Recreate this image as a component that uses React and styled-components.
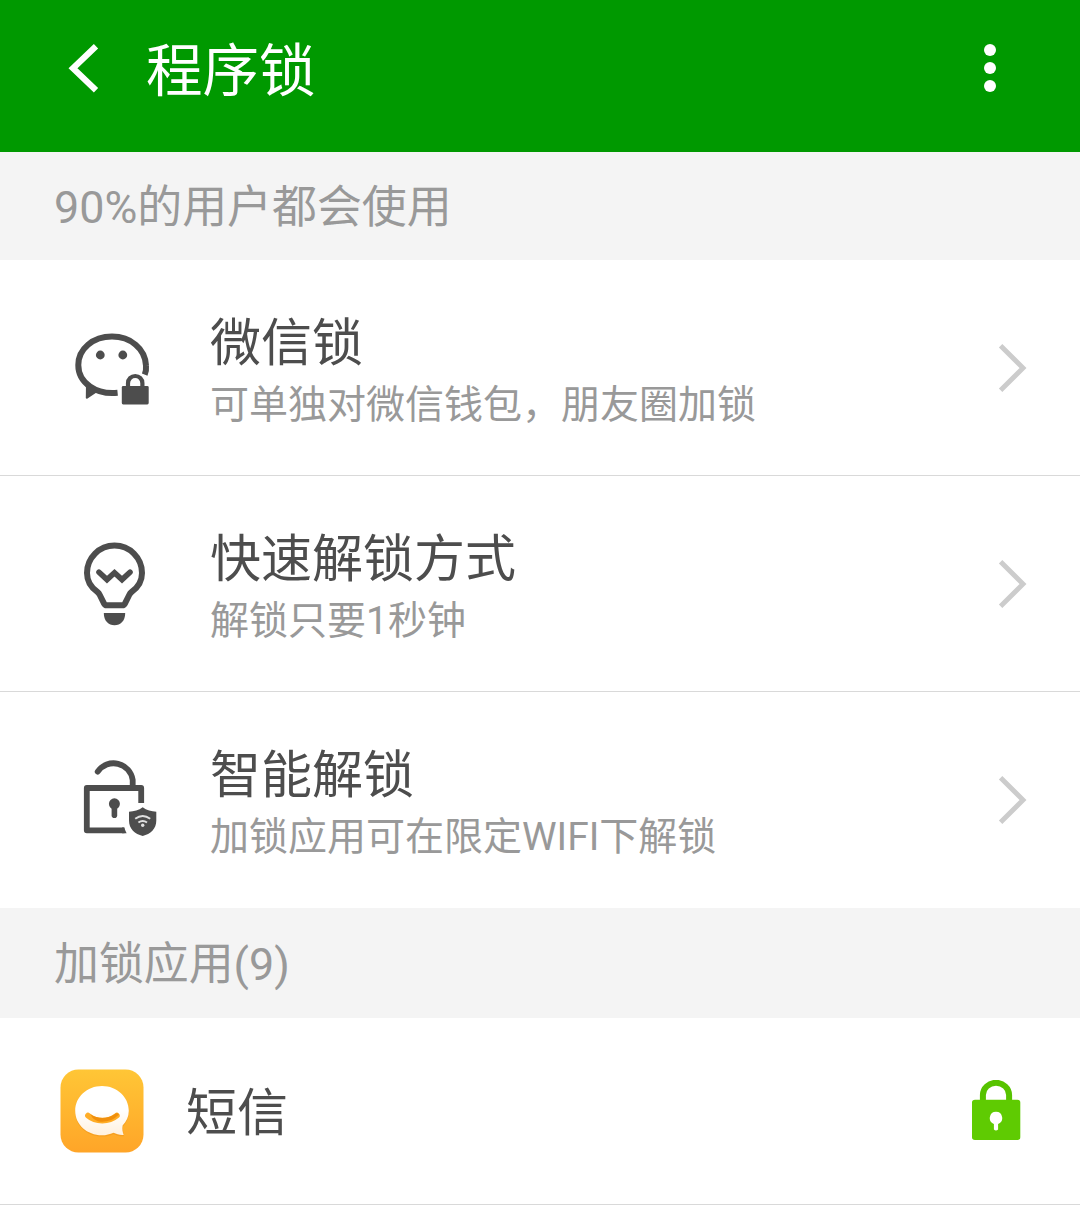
import React from 'react';
import styled, { createGlobalStyle } from 'styled-components';

const lockOptions = [
  { id: 'wechat', title: '微信锁', text: '可单独对微信钱包，朋友圈加锁' },
  { id: 'quick', title: '快速解锁方式', text: '解锁只要1秒钟' },
  { id: 'smart', title: '智能解锁', text: '加锁应用可在限定WIFI下解锁' },
];

const WechatIcon = () => (
  <OptionSvg viewBox="60 318 110 99">
    <path
      d="M144.7 374.6 C145.9 371.8 146.3 368.5 146 365.5 C145.2 348.5 130.5 336.6 112 336.6 C93 336.6 78.3 349 78.3 365 C78.3 374 82.5 381.3 90 386.5 C97.5 391.8 107 393.8 117.6 392.8"
      fill="none"
      stroke="#4d4d4d"
      strokeWidth="6"
    />
    <path d="M86 383 L85.8 398 Q86.4 399.2 87.5 398.4 L98 391.5 Z" fill="#4d4d4d" />
    <circle cx="100.3" cy="355" r="4.4" fill="#4d4d4d" />
    <circle cx="122.8" cy="355" r="4.4" fill="#4d4d4d" />
    <path
      d="M128 388 V383.2 A7.2 7.2 0 0 1 142.4 383.2 V388"
      fill="none"
      stroke="#4d4d4d"
      strokeWidth="4.2"
    />
    <rect x="121.8" y="386" width="26.9" height="18.4" rx="1.4" fill="#4d4d4d" />
  </OptionSvg>
);

const BulbIcon = () => (
  <OptionSvg viewBox="60 534 110 99">
    <path
      d="M106.5 605.3 H122.5 Q124 605.3 124.8 603.8 L129.2 595 Q130 593.4 131.5 592 C138 587.5 142 581 142 573 A27.5 27.5 0 0 0 87 573 C87 581 91 587.5 97.5 592 Q99 593.4 99.8 595 L104.2 603.8 Q105 605.3 106.5 605.3 Z"
      fill="none"
      stroke="#4d4d4d"
      strokeWidth="6"
    />
    <path
      d="M99 572.2 L107 579.6 L114.5 572.8 L122 579.6 L130 572.2"
      fill="none"
      stroke="#4d4d4d"
      strokeWidth="5.6"
      strokeLinecap="round"
    />
    <path d="M103.8 613 H125.2 C125.2 621 120.5 625.2 114.5 625.2 C108.5 625.2 103.8 621 103.8 613 Z" fill="#4d4d4d" />
  </OptionSvg>
);

const SmartLockIcon = () => (
  <OptionSvg viewBox="60 750 110 99">
    <path
      d="M97.7 771.6 A19.3 19.3 0 0 1 132.7 780 V787"
      fill="none"
      stroke="#4d4d4d"
      strokeWidth="5.8"
      strokeLinecap="round"
    />
    <path
      d="M141.2 803 V788 H86.8 V830.3 H124.5"
      fill="none"
      stroke="#4d4d4d"
      strokeWidth="5.8"
      strokeLinejoin="round"
    />
    <path d="M122 827.4 H124 L126.6 833.2 H122 Z" fill="#4d4d4d" />
    <circle cx="114.4" cy="803.8" r="5.5" fill="#4d4d4d" />
    <path d="M114.4 804 V815.3" fill="none" stroke="#4d4d4d" strokeWidth="5.6" strokeLinecap="round" />
    <path
      d="M142.7 807.3 C146.5 810.3 151.5 811.5 156.3 811.8 V820.5 C156.3 829 150.5 834 142.7 836 C134.9 834 129 829 129 820.5 V811.8 C133.9 811.5 138.9 810.3 142.7 807.3 Z"
      fill="#4d4d4d"
    />
    <path d="M135.2 818.8 Q142.7 813.2 150.2 818.8" fill="none" stroke="#e0e0e0" strokeWidth="1.9" />
    <path d="M138.4 822.6 Q142.7 819.2 147 822.6" fill="none" stroke="#e0e0e0" strokeWidth="1.9" />
    <circle cx="142.7" cy="825.3" r="1.7" fill="#e0e0e0" />
  </OptionSvg>
);

const icons = {
  wechat: WechatIcon,
  quick: BulbIcon,
  smart: SmartLockIcon,
};

const MessageIcon = () => (
  <AppSvg viewBox="60 1069 84 84">
    <defs>
      <linearGradient id="appBg" x1="0" y1="0" x2="0" y2="1">
        <stop offset="0" stopColor="#ffc636" />
        <stop offset="1" stopColor="#ffa528" />
      </linearGradient>
      <linearGradient id="bubble" x1="0" y1="0" x2="0" y2="1">
        <stop offset="0" stopColor="#ffffff" />
        <stop offset="0.5" stopColor="#ffffff" />
        <stop offset="1" stopColor="#fff1de" />
      </linearGradient>
    </defs>
    <rect x="60.5" y="1069.5" width="83" height="83" rx="18" fill="url(#appBg)" />
    <path
      d="M102 1087.5 C117 1087.5 128.8 1098 128.8 1112 C128.8 1118 126.5 1122.5 123 1126.5 C122.8 1130.5 123.3 1134 124.2 1136.3 C120 1136.6 116.5 1135.6 113.5 1134.2 C110 1135.6 106 1136.6 102 1136.6 C87 1136.6 75.2 1126 75.2 1112 C75.2 1098 87 1087.5 102 1087.5 Z"
      fill="#e98d12"
      opacity="0.4"
    />
    <path
      d="M102 1086 C117 1086 128.8 1097 128.8 1110.8 C128.8 1116.5 126.5 1121.5 122.6 1125.5 C122 1129 122.5 1132 123.7 1134.9 C119.7 1135.2 116.5 1134 113.5 1132.7 C110 1134.2 106 1135.3 102 1135.3 C87 1135.3 75.2 1124.6 75.2 1110.8 C75.2 1097 87 1086 102 1086 Z"
      fill="url(#bubble)"
    />
    <path
      d="M88 1115.6 C95.5 1122.2 109 1122.2 116.8 1115.6"
      fill="none"
      stroke="#ffad26"
      strokeWidth="5.8"
      strokeLinecap="round"
    />
    <path
      d="M90.5 1114.2 C98 1119.3 107 1119.3 114.5 1114.2 C116 1112.6 118 1113 119 1114.6 C113.5 1120 108 1121.8 102.3 1121.8 C97.5 1121.8 92.5 1119.5 90.5 1114.2 Z"
      fill="#f08f0c"
    />
  </AppSvg>
);

const App = () => {
  return (
    <>
      <GlobalStyle />
      <Screen>
        <TopBar>
          <BackButton aria-label="返回">
            <svg width="34" height="52" viewBox="66 42 34 52">
              <path d="M96 46.2 L73 68.2 L96 90.2" fill="none" stroke="#fff" strokeWidth="6.2" />
            </svg>
          </BackButton>
          <PageTitle>程序锁</PageTitle>
          <MenuButton aria-label="更多">
            <Dot />
            <Dot />
            <Dot />
          </MenuButton>
        </TopBar>

        <SectionTitle $height={108}>90%的用户都会使用</SectionTitle>
        <List>
          {lockOptions.map(({ id, title, text }) => {
            const Icon = icons[id];
            return (
              <OptionRow key={id}>
                <Icon />
                <OptionText>
                  <ItemTitle>{title}</ItemTitle>
                  <ItemNote>{text}</ItemNote>
                </OptionText>
                <svg width="30" height="51" viewBox="998 342 30 51">
                  <path d="M1000.6 345.8 L1023 368 L1000.6 390.2" fill="none" stroke="#ccc" strokeWidth="4.9" />
                </svg>
              </OptionRow>
            );
          })}
        </List>

        <SectionTitle $height={110}>加锁应用(9)</SectionTitle>
        <List>
          <AppRow>
            <MessageIcon />
            <ItemTitle>短信</ItemTitle>
            <LockSvg viewBox="972 1080 49 62">
              <path
                d="M982.9 1103 V1095 A13.1 12.2 0 0 1 1009.1 1095 V1103"
                fill="none"
                stroke="#57c300"
                strokeWidth="6"
              />
              <path
                fillRule="evenodd"
                d="M975 1099.7 H1017.5 Q1020.3 1099.7 1020.3 1102.5 V1137.3 Q1020.3 1140 1017.5 1140 H975 Q972 1140 972 1137.3 V1102.5 Q972 1099.7 975 1099.7 Z M996 1111.8 A6.3 6.3 0 0 0 993.9 1124 V1129.5 Q996 1131.5 998.1 1129.5 V1124 A6.3 6.3 0 0 0 996 1111.8 Z"
                fill="#5fcb02"
              />
            </LockSvg>
          </AppRow>
        </List>
      </Screen>
    </>
  );
};

export default App;

const GlobalStyle = createGlobalStyle`
  body {
    margin: 0;
    background-color: #fff;
  }
  * {
    box-sizing: border-box;
  }
`;

const Screen = styled.div`
  width: 1080px;
  min-height: 1232px;
  background-color: #fff;
  font-family: Roboto, 'Noto Sans CJK SC', sans-serif;
  color: #4d4d4d;

  svg {
    display: block;
    flex-shrink: 0;
  }
`;

const TopBar = styled.header`
  display: flex;
  align-items: center;
  height: 152px;
  padding: 0 84px 16px 66px;
  background-color: #009900;
`;

const BackButton = styled.button`
  padding: 0;
  border: none;
  background: none;
  cursor: pointer;
`;

const PageTitle = styled.h1`
  margin: 0;
  padding-top: 8px;
  margin-left: 46px;
  font-weight: 400;
  font-size: 56.5px;
  line-height: 70px;
  color: #fff;
`;

const MenuButton = styled.button`
  display: flex;
  flex-direction: column;
  gap: 6px;
  margin-left: auto;
  padding: 0;
  border: none;
  background: none;
  cursor: pointer;
`;

const Dot = styled.span`
  width: 12px;
  height: 12px;
  border-radius: 50%;
  background-color: #fff;
`;

const SectionTitle = styled.h2`
  display: flex;
  align-items: center;
  height: ${({ $height }) => $height}px;
  margin: 0;
  padding: 4px 54px 0;
  background-color: #f4f4f4;
  font-weight: 400;
  font-size: 44.9px;
  line-height: 60px;
  color: #999;
`;

const List = styled.ul`
  margin: 0;
  padding: 0;
  list-style: none;
`;

const OptionRow = styled.li`
  display: flex;
  align-items: center;
  height: 216px;
  padding: 0 52px 0 60px;
  border-bottom: 1px solid #d9d9d9;

  &:last-child {
    border-bottom-color: transparent;
  }
`;

const OptionSvg = styled.svg`
  width: 110px;
  height: 99px;
`;

const OptionText = styled.div`
  flex: 1;
  margin-left: 40px;
  padding-top: 10px;
`;

const ItemTitle = styled.h3`
  margin: 0;
  font-weight: 400;
  font-size: 51px;
  line-height: 64px;
  color: #4d4d4d;
`;

const ItemNote = styled.p`
  margin: 0;
  font-size: 39px;
  line-height: 58px;
  color: #999;
`;

const AppRow = styled.li`
  display: flex;
  align-items: center;
  height: 187px;
  padding: 0 59px 0 60px;
  border-bottom: 1px solid #d9d9d9;

  h3 {
    margin-left: 42px;
    padding-top: 6px;
  }
`;

const AppSvg = styled.svg`
  width: 84px;
  height: 84px;
`;

const LockSvg = styled.svg`
  width: 49px;
  height: 62px;
  margin-left: auto;
`;
